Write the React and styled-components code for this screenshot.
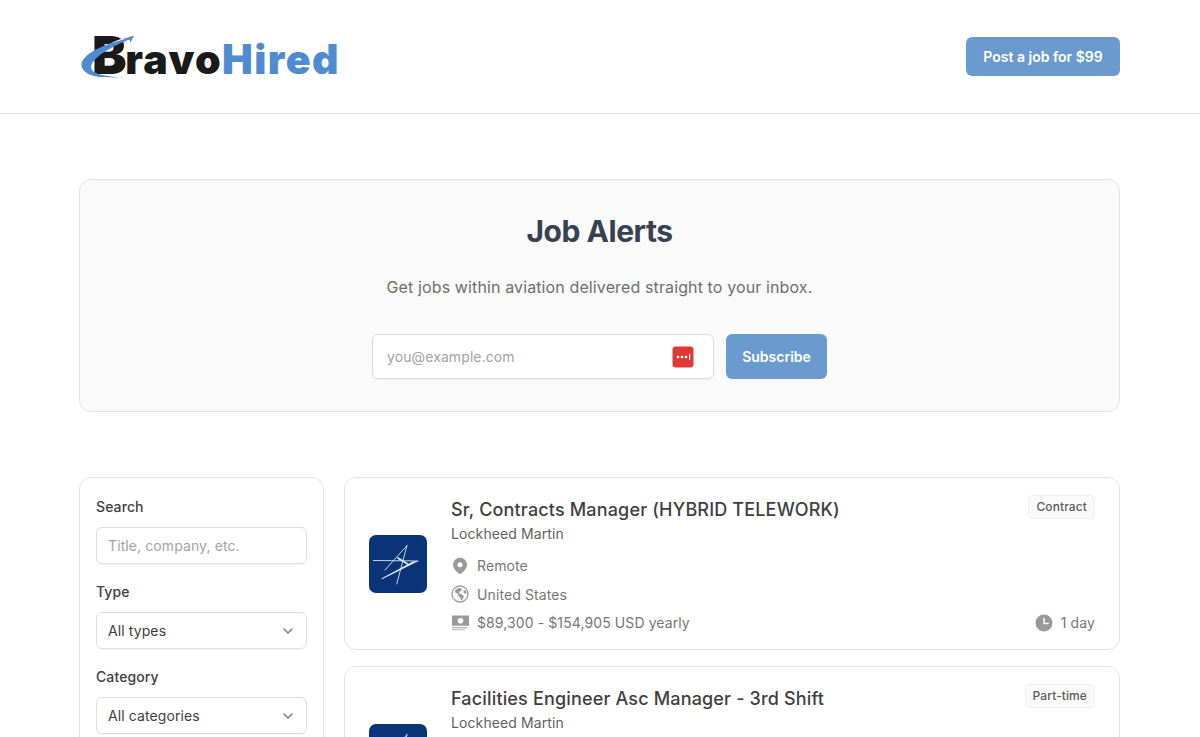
import styled, { createGlobalStyle } from "styled-components";
import { ChevronDown } from "lucide-react";

const GlobalStyle = createGlobalStyle`
  html, body {
    margin: 0;
    height: 737px;
    overflow: hidden;
    background: #ffffff;
    font-family: Inter, "Liberation Sans", sans-serif;
    letter-spacing: 0.1px;
  }
  * { box-sizing: border-box; }
`;

const Header = styled.header`
  height: 114px;
  border-bottom: 1px solid #dcdcdc;
`;

const HeaderInner = styled.div`
  width: 1041px;
  height: 113px;
  margin-left: 79px;
  display: flex;
  align-items: center;
  justify-content: space-between;
`;

const Logo = styled.a`
  position: relative;
  display: block;
  width: 262px;
  height: 60px;
  padding: 1px 0 0 13px;
  font-family: Inter, sans-serif;
  font-size: 41px;
  line-height: 56px;
  font-weight: 900;
  letter-spacing: 1.4px;
  white-space: nowrap;
  color: #1a1a1a;
`;

const LogoInitial = styled.span`
  font-size: 52px;
  letter-spacing: -1.5px;
`;

const LogoBlue = styled.span`
  color: #4f8bd0;
`;

const LogoSwoosh = styled.svg`
  position: absolute;
  left: 0;
  top: 0;
  width: 62px;
  height: 60px;
`;

const PostButton = styled.button`
  width: 154px;
  height: 39px;
  border: 0;
  border-radius: 6px;
  background: #6a9bcf;
  color: #fff;
  font: 600 14px Inter, sans-serif;
`;

const Main = styled.main`
  width: 1041px;
  margin: 65px 0 0 79px;
`;

const Hero = styled.section`
  height: 233px;
  padding-top: 33px;
  border: 1px solid #e3e3e3;
  border-radius: 12px;
  background: #fafafa;
  display: flex;
  flex-direction: column;
  align-items: center;
`;

const HeroTitle = styled.h1`
  margin: 0;
  font-size: 30px;
  line-height: 36px;
  font-weight: 700;
  letter-spacing: -0.45px;
  color: #374151;
`;

const HeroText = styled.p`
  margin: 26px 0 0;
  font-size: 16px;
  line-height: 24px;
  letter-spacing: 0.12px;
  color: #6f6f6f;
`;

const SubscribeRow = styled.form`
  display: flex;
  gap: 12px;
  margin-top: 35px;
`;

const EmailField = styled.div`
  width: 342px;
  height: 45px;
  padding: 0 19px 0 14px;
  border: 1px solid #dcdcdc;
  border-radius: 6px;
  background: #fff;
  box-shadow: 0 1px 2px rgba(0, 0, 0, 0.05);
  display: flex;
  align-items: center;
  justify-content: space-between;
  font-size: 14px;
  color: #a3a3a3;
`;

const SubscribeButton = styled.button`
  width: 101px;
  height: 45px;
  border: 0;
  border-radius: 6px;
  background: #6a9bcf;
  color: #fff;
  font: 600 14px Inter, sans-serif;
`;

const Columns = styled.div`
  display: grid;
  grid-template-columns: 245px 776px;
  gap: 20px;
  margin-top: 65px;
`;

const Filters = styled.aside`
  height: 400px;
  padding: 20px 16px;
  border: 1px solid #e3e3e3;
  border-radius: 12px;
`;

const FilterLabel = styled.div`
  margin: ${({ $first }) => ($first ? "0" : "19px")} 0 12px;
  font-size: 14px;
  line-height: 17px;
  font-weight: 500;
  color: #404040;
`;

const FilterControl = styled.div`
  height: 37px;
  padding: 0 11px;
  border: 1px solid #dedede;
  border-radius: 6px;
  box-shadow: 0 1px 1px rgba(0, 0, 0, 0.04);
  display: flex;
  align-items: center;
  justify-content: space-between;
  font-size: 14px;
  color: ${({ $placeholder }) => ($placeholder ? "#a3a3a3" : "#404040")};
  svg { color: #777; margin-right: -1px; }
`;

const JobList = styled.div`
  display: flex;
  flex-direction: column;
  gap: 16px;
`;

const JobCard = styled.article`
  height: 173px;
  padding: 20px 24px 0;
  border: 1px solid #e3e3e3;
  border-radius: 12px;
  display: flex;
`;

const CompanyLogo = styled.svg`
  width: 58px;
  height: 58px;
  margin-top: 37px;
  flex: none;
`;

const JobBody = styled.div`
  flex: 1;
  margin-left: 24px;
  display: flex;
  flex-direction: column;
`;

const TitleRow = styled.div`
  display: flex;
  align-items: flex-start;
  justify-content: space-between;
`;

const JobTitle = styled.h2`
  margin: 0;
  font-size: 18px;
  line-height: 24px;
  font-weight: 500;
  letter-spacing: 0.16px;
  color: #3f3f3f;
`;

const TypeBadge = styled.span`
  margin-top: -3px;
  padding: 0 7px;
  height: 24px;
  border: 1px solid #eeeeee;
  border-radius: 5px;
  background: #fafafa;
  font-size: 12px;
  line-height: 22px;
  font-weight: 500;
  color: #5c5c5c;
`;

const Company = styled.div`
  margin-top: 1px;
  margin-bottom: 7.5px;
  font-size: 14px;
  line-height: 21px;
  color: #5f5f5f;
`;

const MetaRow = styled.div`
  height: 28.5px;
  display: flex;
  align-items: center;
  justify-content: space-between;
`;

const MetaItem = styled.div`
  display: flex;
  align-items: center;
  gap: 8px;
  font-size: 14px;
  color: #777;
  svg { flex: none; }
`;

const PlaceIcon = () => (
  <svg width="18" height="18" viewBox="0 0 18 18">
    <path fill="#9a9a9a" fillRule="evenodd" d="M9 .8a7 7 0 0 0-7 7c0 3.900 4 7.700 7 9.500 3-1.800 7-5.600 7-9.500a7 7 0 0 0-7-7Zm0 9.400a2.500 2.500 0 1 1 0-5 2.500 2.500 0 0 1 0 5Z" />
  </svg>
);

const GlobeIcon = () => (
  <svg width="18" height="18" viewBox="0 0 18 18">
    <circle cx="9" cy="9" r="8" fill="none" stroke="#9a9a9a" strokeWidth="1.300" />
    <path fill="#9a9a9a" d="M4 5.200 7.500 3l3.600.5-.8 2.400-2 .8-.2 2 2.600.6 2.200 1.600-1 3.200-1.600 1.400-1-2.800-2-1.600-.2-2.200L4 7.400Z" />
    <path fill="#9a9a9a" d="m12.600 5 2.200.6.8 3-2 .2-1-1.600Z" />
  </svg>
);

const MoneyIcon = () => (
  <svg width="18" height="18" viewBox="0 0 18 18">
    <path fill="#9a9a9a" fillRule="evenodd" d="M1 1.500h17v10.300H1Zm8.500 2.500a2.800 2.800 0 1 0 0 5.600 2.800 2.800 0 0 0 0-5.600Z" />
    <path fill="#b5b5b5" d="M1 13h15.500v1.200H1ZM1 15.200h13v1.100H1Z" />
  </svg>
);

const ClockIcon = () => (
  <svg width="18" height="18" viewBox="0 0 18 18">
    <circle cx="9" cy="9" r="8.500" fill="#9a9a9a" />
    <path fill="none" stroke="#fff" strokeWidth="1.500" strokeLinecap="round" strokeLinejoin="round" d="M9 4.500v5h4" />
  </svg>
);

const LockheedLogo = () => (
  <CompanyLogo viewBox="0 0 58 58">
    <rect width="58" height="58" rx="7" fill="#0a3478" />
    <path fill="none" stroke="#c6d6ea" strokeLinecap="round" strokeWidth="1" d="M4.500 25.500 49 26M38 10.500 16 35M38 10.500 27.700 49" />
    <path fill="#e6eef7" d="M49.500 26 12.500 44.500l.3-1.300L44 26.500Z" />
    <path fill="#e6eef7" d="m29 22 11 7-1.200 1L28 23.500Z" />
  </CompanyLogo>
);

const JobRow = ({ title, badge, location, salary, age }) => (
  <JobCard>
    <LockheedLogo />
    <JobBody>
      <TitleRow>
        <JobTitle>{title}</JobTitle>
        <TypeBadge>{badge}</TypeBadge>
      </TitleRow>
      <Company>Lockheed Martin</Company>
      <MetaRow>
        <MetaItem><PlaceIcon />{location}</MetaItem>
      </MetaRow>
      <MetaRow>
        <MetaItem><GlobeIcon />United States</MetaItem>
      </MetaRow>
      <MetaRow>
        <MetaItem><MoneyIcon />{salary}</MetaItem>
        <MetaItem><ClockIcon />{age}</MetaItem>
      </MetaRow>
    </JobBody>
  </JobCard>
);

export default function App() {
  return (
    <>
      <GlobalStyle />
      <Header>
        <HeaderInner>
          <Logo>
            <LogoInitial>B</LogoInitial>ravo<LogoBlue>Hired</LogoBlue>
            <LogoSwoosh viewBox="0 0 62 60">
              <path fill="none" stroke="#fff" strokeWidth="2" d="M49 11C33 15 15 25 11 36" />
              <path fill="#4f8bd0" d="M55 10C35 14 8 23 3 35c-2.500 7 5 14 18 15 8 .5 24 1 24 1-10-1.500-28-2-32-8-3-5 2-10 8-15 8-6 18-11 28-15Z" />
              <path fill="#4f8bd0" d="m44 12 11-3.500-3.500 7-1-3Z" />
            </LogoSwoosh>
          </Logo>
          <PostButton>Post a job for $99</PostButton>
        </HeaderInner>
      </Header>
      <Main>
        <Hero>
          <HeroTitle>Job Alerts</HeroTitle>
          <HeroText>Get jobs within aviation delivered straight to your inbox.</HeroText>
          <SubscribeRow>
            <EmailField>
              you@example.com
              <svg width="22" height="22" viewBox="0 0 22 22">
                <rect width="21" height="21" x="0.500" y="0.500" rx="3" fill="#dd3a36" />
                <circle cx="6" cy="11" r="1.300" fill="#fff" />
                <circle cx="10" cy="11" r="1.300" fill="#fff" />
                <circle cx="14" cy="11" r="1.300" fill="#fff" />
                <rect x="17" y="8" width="1.200" height="6" fill="#fff" />
              </svg>
            </EmailField>
            <SubscribeButton type="button">Subscribe</SubscribeButton>
          </SubscribeRow>
        </Hero>
        <Columns>
          <Filters>
            <FilterLabel $first>Search</FilterLabel>
            <FilterControl $placeholder>Title, company, etc.</FilterControl>
            <FilterLabel>Type</FilterLabel>
            <FilterControl>All types<ChevronDown size={16} /></FilterControl>
            <FilterLabel>Category</FilterLabel>
            <FilterControl>All categories<ChevronDown size={16} /></FilterControl>
          </Filters>
          <JobList>
            <JobRow
              title="Sr, Contracts Manager (HYBRID TELEWORK)"
              badge="Contract"
              location="Remote"
              salary="$89,300 - $154,905 USD yearly"
              age="1 day"
            />
            <JobRow
              title="Facilities Engineer Asc Manager - 3rd Shift"
              badge="Part-time"
              location="Remote"
              salary="$89,300 - $154,905 USD yearly"
              age="1 day"
            />
          </JobList>
        </Columns>
      </Main>
    </>
  );
}
